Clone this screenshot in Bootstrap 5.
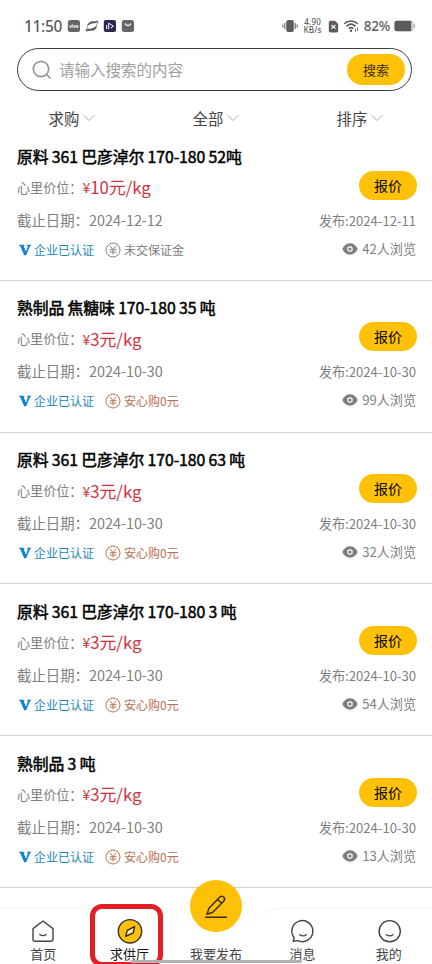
<!DOCTYPE html>
<html lang="zh-CN">
<head>
<meta charset="utf-8">
<meta name="viewport" content="width=device-width, initial-scale=1">
<title>求供厅</title>
<link href="https://cdn.jsdelivr.net/npm/bootstrap@5.3.0/dist/css/bootstrap.min.css" rel="stylesheet">
<style>
body{font-family:"Noto Sans CJK SC",sans-serif;color:#444;background:#fff;height:964px;overflow:hidden}
svg{display:block;flex:none}
.screen{width:432px;height:964px;overflow:hidden}
.status{height:48px;padding:4px 16px 0 24px;font-family:"Noto Sans","Noto Sans CJK SC",sans-serif;font-weight:500;color:#5c5c5c}
.clock{font-size:15.5px;line-height:20px;width:43px;letter-spacing:-.35px}
.rate{font-size:8px;line-height:8px;width:22px;font-weight:500;letter-spacing:.2px}
.battery-text{font-size:13.5px;line-height:20px;letter-spacing:-.2px}
.search{height:43px;margin:0 20px 0 17px;border:1.4px solid #3c3c3c!important;padding:0 6px 0 14px}
.search-hint{font-size:15.5px;color:#a0a0a0;margin-left:7px}
.yellow{background:#ffc107;border:0;color:#111;line-height:1}
.btn-search{width:58px;height:31px;font-size:13px;padding:0;color:#3a2f10}
.filters{height:38px;padding-top:16px;font-size:15.4px;line-height:20px;color:#444}
.filters .col{gap:4px}
.offer{height:151.8px;padding:11.500px 16px 0 17px;border-bottom:1px solid #d2d2d2;color:#808080}
.offer-title{font-size:15.8px;line-height:31px;font-weight:400;color:#000;letter-spacing:-.09px;-webkit-text-stroke:.5px #000}
.offer-body{height:92px}
.line-price{height:32px;font-size:13.1px}
.line-date{height:32px;font-size:14.4px}
.line-tags{height:28px;font-size:12px}
.yen{font-size:14px;color:#d0323f}
.amount{font-size:16.8px;color:#d0323f}
.verified{color:#1c86b8;width:88px;gap:3px;padding-left:2px}
.deposit{gap:3px}
.paid{color:#b97050}
.side{font-size:13.1px}
.btn-offer{width:58px;height:29px;font-size:14px;padding:0 0 1px;margin-top:-1px;margin-right:-1px;color:#000}
.side-date{height:20px;line-height:20px;margin-top:11px}
.side-views{height:28px;margin-top:4px;gap:4px}
.tabbar{height:56px;left:0;top:908px;width:432px}
.tabbar-bg{left:0;top:-30px}
.tab{font-size:13px;line-height:16px;color:#444;padding-top:10px;gap:2px}
.tab-icon{height:26px}
.fab{width:52px;height:52px;margin-top:-38px;background:#ffc107;margin-bottom:12px}
.tab-now{color:#111}
.marker{left:90px;top:904px;width:73px;height:63px;border:5px solid #e31f26;border-radius:12px}
.homebar{left:130px;top:960px;width:172px;height:3px;background:#b2b2b2;border-radius:2px}
</style>
</head>
<body>
<svg class="d-none" xmlns="http://www.w3.org/2000/svg">
<symbol id="chev" viewBox="0 0 12 8"><path d="M.7 1.2 6 6.6l5.300-5.400" fill="none" stroke="#aaa" stroke-width="1"/></symbol>
<symbol id="vee" viewBox="0 0 12 12"><path d="M0 .8h5.300v1H4.500l2.500 5.900 2.100-5.900H7.900v-1H12v1h-.8L7.100 11.300H5.200L1.100 1.800H0z" fill="#0d7fd8"/></symbol>
<symbol id="coin" viewBox="0 0 16 16"><g fill="none" stroke="currentColor" stroke-width="1"><circle cx="8" cy="8" r="7"/><path d="M5 4l3 3.600L11 4M8 7.600v4.900M4.600 7.700h6.800M4.600 10h6.800"/></g></symbol>
<symbol id="eye" viewBox="0 0 16 12"><path d="M.3 6C2 2.300 4.700.3 8 .3S14 2.300 15.700 6C14 9.700 11.300 11.700 8 11.700S2 9.700.3 6z" fill="#808080"/><circle cx="8" cy="6" r="2.200" fill="none" stroke="#fff" stroke-width="1.200"/></symbol>
</svg>
<main class="screen position-relative">
<header class="status d-flex align-items-center">
<span class="clock">11:50</span>
<div class="d-flex align-items-center gap-1">
<svg width="14" height="14" viewBox="0 0 14 14"><rect x=".8" y="1" width="12.200" height="12" rx="2.500" fill="#666"/><text x="6.900" y="8.600" font-size="4.600" font-weight="700" text-anchor="middle" fill="#fff">vivo</text></svg>
<svg width="14" height="14" viewBox="0 0 14 14"><path d="M2 7.500C2.500 3.800 6 1.700 9.800 2.400L12.500 1.600C13.500 3 11 4.500 9.500 4.200 6.500 4 4 5.500 2 7.500zM12 6C12 10 8.500 12.500 4.500 11.700L1.500 12.600C.3 11 2.500 9.500 4 9.800 7 10 10 8.500 12 6z" fill="#5c5c5c"/><path d="M1.200 12C1 9.800 2 8.500 3 7.700M12.800 2.200C13 4 12.500 5 11.500 6" fill="none" stroke="#666" stroke-width=".9"/></svg>
<svg width="14" height="14" viewBox="0 0 14 14"><rect x=".8" y="1" width="12.200" height="12" rx="2" fill="#2b2850"/><path d="M5.700 10.200V4.200l4.800 3-2.800 1.900M3.700 6v4.200" fill="none" stroke="#fff" stroke-width="1"/></svg>
<svg width="14" height="14" viewBox="0 0 14 14"><rect x=".8" y="1" width="12.200" height="12" rx="2.500" fill="#666"/><path d="M4.200 4.500c1 2.700 4.600 2.700 5.600 0" fill="none" stroke="#fff" stroke-width="1.300"/></svg>
</div>
<div class="d-flex align-items-center ms-auto">
<svg width="16" height="14" viewBox="0 0 16 14"><rect x="4.200" y="1" width="7.600" height="12" rx="2" fill="#5c5c5c"/><path d="M2.700 4v6M13.300 4v6M.8 5.500v3M15.200 5.500v3" stroke="#777" stroke-width="1.200"/></svg>
<span class="rate text-center ms-1">4.90 KB/s</span>
<svg class="ms-1" width="11" height="13" viewBox="0 0 11 13"><path d="M2.500.8H7L10.200 4v6.800q0 1.700-1.700 1.700h-6Q.8 12.500.8 10.800V2.500Q.8.800 2.500.8z" fill="#5c5c5c"/><path d="m3.500 5 4 3.600M7.500 5l-4 3.600" stroke="#fff" stroke-width="1.200"/></svg>
<svg class="ms-1" width="17" height="14" viewBox="0 0 17 14"><g fill="none" stroke="#5c5c5c" stroke-width="1.600"><path d="M1.200 4.800C5 1 11 1 14.800 4.800M3.500 7.300c2.800-2.600 6.200-2.600 9 0M5.700 9.600c1.500-1.300 3.100-1.300 4.600 0"/></g><circle cx="8" cy="11.800" r="1.200" fill="#5c5c5c"/><path d="M12.500 9.500v3M14.500 8.500V12" stroke="#777" stroke-width="1"/></svg>
<span class="battery-text ms-1">82%</span>
<svg class="ms-1" width="22" height="12" viewBox="0 0 22 12"><rect x=".5" y=".7" width="19" height="10.600" rx="2.200" fill="#c5c5c5"/><path d="M2.700.7H17v10.600H2.700Q.5 11.300.5 9.100V2.900Q.5.700 2.700.7z" fill="#5c5c5c"/><path d="M20.500 4v4" stroke="#bbb" stroke-width="1.200"/></svg>
</div>
</header>
<div class="search border rounded-pill d-flex align-items-center">
<svg width="20" height="20" viewBox="0 0 20 20"><g fill="none" stroke="#999" stroke-width="1.700"><circle cx="9" cy="9" r="7.700"/><path d="m14.500 14.500 4 4"/></g></svg>
<span class="search-hint">请输入搜索的内容</span>
<button class="btn yellow btn-search rounded-pill ms-auto">搜索</button>
</div>
<nav class="filters row g-0">
<div class="col d-flex justify-content-center align-items-center"><span>求购</span><svg width="12" height="8"><use href="#chev"/></svg></div>
<div class="col d-flex justify-content-center align-items-center"><span>全部</span><svg width="12" height="8"><use href="#chev"/></svg></div>
<div class="col d-flex justify-content-center align-items-center"><span>排序</span><svg width="12" height="8"><use href="#chev"/></svg></div>
</nav>
<section id="offers">
<article class="offer">
<div class="offer-title">原料 361 巴彦淖尔 170-180 52吨</div>
<div class="offer-body d-flex justify-content-between">
<div>
<div class="line-price d-flex align-items-center"><span>心里价位：</span><span class="yen">¥</span><span class="amount">10元/kg</span></div>
<div class="line-date d-flex align-items-center">截止日期：2024-12-12</div>
<div class="line-tags d-flex align-items-center"><span class="verified d-flex align-items-center"><svg width="12" height="12"><use href="#vee"/></svg>企业已认证</span><span class="deposit d-flex align-items-center"><svg width="16" height="16"><use href="#coin"/></svg>未交保证金</span></div>
</div>
<div class="side d-flex flex-column align-items-end"><button class="btn yellow btn-offer rounded-pill">报价</button><div class="side-date">发布:2024-12-11</div><div class="side-views d-flex align-items-center"><svg width="16" height="12"><use href="#eye"/></svg>42人浏览</div></div>
</div>
</article>
<article class="offer">
<div class="offer-title">熟制品 焦糖味 170-180 35 吨</div>
<div class="offer-body d-flex justify-content-between">
<div>
<div class="line-price d-flex align-items-center"><span>心里价位：</span><span class="yen">¥</span><span class="amount">3元/kg</span></div>
<div class="line-date d-flex align-items-center">截止日期：2024-10-30</div>
<div class="line-tags d-flex align-items-center"><span class="verified d-flex align-items-center"><svg width="12" height="12"><use href="#vee"/></svg>企业已认证</span><span class="deposit paid d-flex align-items-center"><svg width="16" height="16"><use href="#coin"/></svg>安心购0元</span></div>
</div>
<div class="side d-flex flex-column align-items-end"><button class="btn yellow btn-offer rounded-pill">报价</button><div class="side-date">发布:2024-10-30</div><div class="side-views d-flex align-items-center"><svg width="16" height="12"><use href="#eye"/></svg>99人浏览</div></div>
</div>
</article>
<article class="offer">
<div class="offer-title">原料 361 巴彦淖尔 170-180 63 吨</div>
<div class="offer-body d-flex justify-content-between">
<div>
<div class="line-price d-flex align-items-center"><span>心里价位：</span><span class="yen">¥</span><span class="amount">3元/kg</span></div>
<div class="line-date d-flex align-items-center">截止日期：2024-10-30</div>
<div class="line-tags d-flex align-items-center"><span class="verified d-flex align-items-center"><svg width="12" height="12"><use href="#vee"/></svg>企业已认证</span><span class="deposit paid d-flex align-items-center"><svg width="16" height="16"><use href="#coin"/></svg>安心购0元</span></div>
</div>
<div class="side d-flex flex-column align-items-end"><button class="btn yellow btn-offer rounded-pill">报价</button><div class="side-date">发布:2024-10-30</div><div class="side-views d-flex align-items-center"><svg width="16" height="12"><use href="#eye"/></svg>32人浏览</div></div>
</div>
</article>
<article class="offer">
<div class="offer-title">原料 361 巴彦淖尔 170-180 3 吨</div>
<div class="offer-body d-flex justify-content-between">
<div>
<div class="line-price d-flex align-items-center"><span>心里价位：</span><span class="yen">¥</span><span class="amount">3元/kg</span></div>
<div class="line-date d-flex align-items-center">截止日期：2024-10-30</div>
<div class="line-tags d-flex align-items-center"><span class="verified d-flex align-items-center"><svg width="12" height="12"><use href="#vee"/></svg>企业已认证</span><span class="deposit paid d-flex align-items-center"><svg width="16" height="16"><use href="#coin"/></svg>安心购0元</span></div>
</div>
<div class="side d-flex flex-column align-items-end"><button class="btn yellow btn-offer rounded-pill">报价</button><div class="side-date">发布:2024-10-30</div><div class="side-views d-flex align-items-center"><svg width="16" height="12"><use href="#eye"/></svg>54人浏览</div></div>
</div>
</article>
<article class="offer">
<div class="offer-title">熟制品 3 吨</div>
<div class="offer-body d-flex justify-content-between">
<div>
<div class="line-price d-flex align-items-center"><span>心里价位：</span><span class="yen">¥</span><span class="amount">3元/kg</span></div>
<div class="line-date d-flex align-items-center">截止日期：2024-10-30</div>
<div class="line-tags d-flex align-items-center"><span class="verified d-flex align-items-center"><svg width="12" height="12"><use href="#vee"/></svg>企业已认证</span><span class="deposit paid d-flex align-items-center"><svg width="16" height="16"><use href="#coin"/></svg>安心购0元</span></div>
</div>
<div class="side d-flex flex-column align-items-end"><button class="btn yellow btn-offer rounded-pill">报价</button><div class="side-date">发布:2024-10-30</div><div class="side-views d-flex align-items-center"><svg width="16" height="12"><use href="#eye"/></svg>13人浏览</div></div>
</div>
</article>
</section>
<nav class="tabbar position-absolute">
<svg class="tabbar-bg position-absolute" width="432" height="86" viewBox="0 0 432 86"><path d="M-2 30.500H152C172 31 180 50 216 50s44-19 64-19.500H434V88H-2z" fill="#fff" stroke="#f5f5f5"/></svg>
<div class="row g-0 position-relative h-100">
<div class="col tab d-flex flex-column align-items-center"><svg class="tab-icon" width="26" height="26" viewBox="0 0 26 26"><g fill="none" stroke="#444" stroke-width="1.400" stroke-linejoin="round" stroke-linecap="round"><path d="M3 10.600 13 3l10 7.600v10.700q0 2-2 2H5q-2 0-2-2z"/><path d="M9.800 16.500q3.200 2.200 6.400 0"/></g></svg><span>首页</span></div>
<div class="col tab tab-now d-flex flex-column align-items-center"><svg class="tab-icon" width="26" height="26" viewBox="0 0 26 26"><circle cx="13" cy="13.300" r="11.700" fill="#ffc107" stroke="#333" stroke-width="1.400"/><path d="M17.600 8.700 16.300 14.800 8.700 18.300 10.300 12.300z" fill="#ffe9a8" stroke="#222" stroke-width="1.300" stroke-linejoin="round"/></svg><span>求供厅</span></div>
<div class="col tab d-flex flex-column align-items-center"><div class="fab rounded-circle d-flex align-items-center justify-content-center"><svg width="26" height="26" viewBox="0 0 26 26"><g fill="none" stroke="#3b3010" stroke-width="1.500" stroke-linejoin="round" stroke-linecap="round"><path d="M4 21.300 6 15.300 16.600 4.200q2-1.800 4-.2t.3 4L9.800 19.200zM15.200 5.800q.3 3.200 3.900 3.900M2.500 24.200H23.500"/></g></svg></div><span>我要发布</span></div>
<div class="col tab d-flex flex-column align-items-center"><svg class="tab-icon" width="26" height="26" viewBox="0 0 26 26"><g fill="none" stroke="#444" stroke-width="1.400" stroke-linejoin="round" stroke-linecap="round"><path d="M5.200 19.700A10.500 10.500 0 1 1 8.900 22.600L4.200 23.300z"/><path d="M10.700 16.700q3.300 2.400 6.600 0"/></g></svg><span>消息</span></div>
<div class="col tab d-flex flex-column align-items-center"><svg class="tab-icon" width="26" height="26" viewBox="0 0 26 26"><g fill="none" stroke="#444" stroke-width="1.400" stroke-linecap="round"><circle cx="13.700" cy="13.200" r="10.600"/><path d="M10.400 16.700q3.300 2.400 6.600 0"/></g></svg><span>我的</span></div>
</div>
</nav>
<div class="marker position-absolute"></div>
<div class="homebar position-absolute"></div>
</main>
<script src="https://cdn.jsdelivr.net/npm/bootstrap@5.3.0/dist/js/bootstrap.bundle.min.js"></script>
</body>
</html>
